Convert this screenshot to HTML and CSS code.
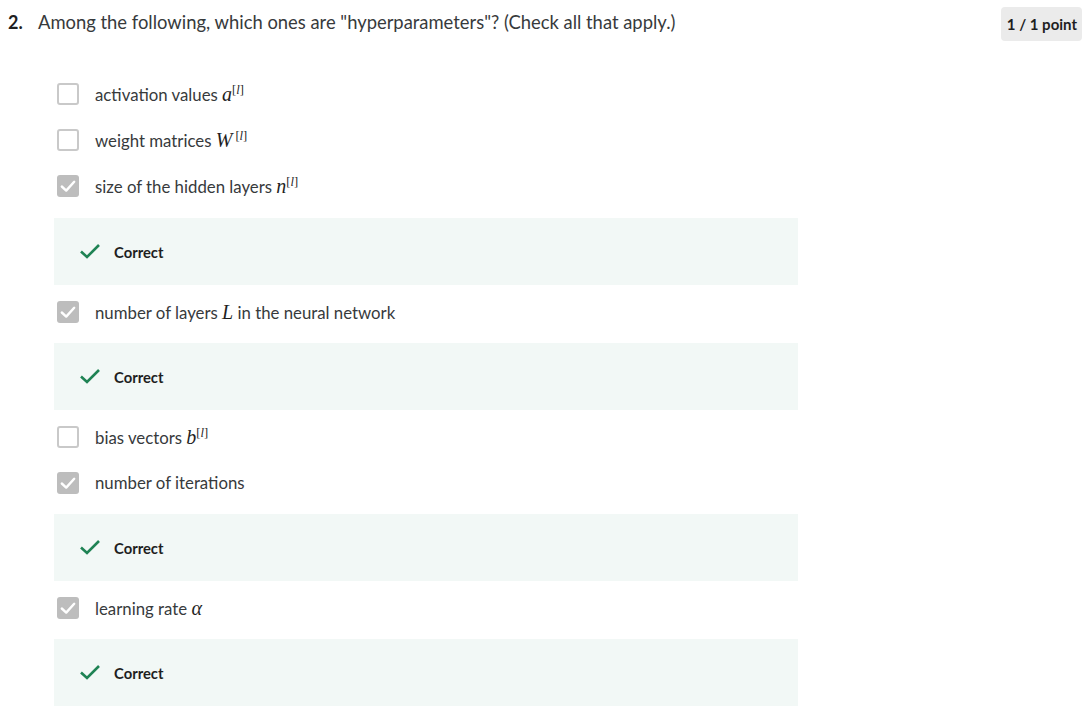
FILE: index.html
```html
<!DOCTYPE html>
<html lang="en">
<head>
<meta charset="utf-8">
<title>Quiz question</title>
<link rel="stylesheet" href="styles.css">
</head>
<body>
<div class="question">
  <div class="q-head">
    <span class="q-num">2.</span>
    <span class="q-text">Among the following, which ones are "hyperparameters"? (Check all that apply.)</span>
    <span class="badge">1 / 1 point</span>
  </div>
  <div class="options">
    <div class="opt"><span class="box"></span><span class="label">activation values <span class="m">a</span><sup class="sup">[<i>l</i>]</sup></span></div>
    <div class="opt"><span class="box"></span><span class="label">weight matrices <span class="m">W</span><sup class="sup sup-w">[<i>l</i>]</sup></span></div>
    <div class="opt"><span class="box checked"><svg viewBox="0 0 22 22" width="22" height="22"><path d="M4.8 11.5 L9.2 15.6 L17.2 6.8" fill="none" stroke="#fff" stroke-width="2.4" stroke-linecap="round" stroke-linejoin="round"/></svg></span><span class="label">size of the hidden layers <span class="m">n</span><sup class="sup">[<i>l</i>]</sup></span></div>
    <div class="fb fb-first"><svg class="ok" viewBox="0 0 20 15" width="20" height="15"><path d="M1 7.5 L7 13 L19 1" fill="none" stroke="#1f8354" stroke-width="2.6"/></svg><span class="fb-text">Correct</span></div>
    <div class="opt"><span class="box checked"><svg viewBox="0 0 22 22" width="22" height="22"><path d="M4.8 11.5 L9.2 15.6 L17.2 6.8" fill="none" stroke="#fff" stroke-width="2.4" stroke-linecap="round" stroke-linejoin="round"/></svg></span><span class="label">number of layers <span class="m">L</span> in the neural network</span></div>
    <div class="fb"><svg class="ok" viewBox="0 0 20 15" width="20" height="15"><path d="M1 7.5 L7 13 L19 1" fill="none" stroke="#1f8354" stroke-width="2.6"/></svg><span class="fb-text">Correct</span></div>
    <div class="opt"><span class="box"></span><span class="label">bias vectors <span class="m">b</span><sup class="sup">[<i>l</i>]</sup></span></div>
    <div class="opt"><span class="box checked"><svg viewBox="0 0 22 22" width="22" height="22"><path d="M4.8 11.5 L9.2 15.6 L17.2 6.8" fill="none" stroke="#fff" stroke-width="2.4" stroke-linecap="round" stroke-linejoin="round"/></svg></span><span class="label">number of iterations</span></div>
    <div class="fb"><svg class="ok" viewBox="0 0 20 15" width="20" height="15"><path d="M1 7.5 L7 13 L19 1" fill="none" stroke="#1f8354" stroke-width="2.6"/></svg><span class="fb-text">Correct</span></div>
    <div class="opt"><span class="box checked"><svg viewBox="0 0 22 22" width="22" height="22"><path d="M4.8 11.5 L9.2 15.6 L17.2 6.8" fill="none" stroke="#fff" stroke-width="2.4" stroke-linecap="round" stroke-linejoin="round"/></svg></span><span class="label">learning rate <span class="m">α</span></span></div>
    <div class="fb"><svg class="ok" viewBox="0 0 20 15" width="20" height="15"><path d="M1 7.5 L7 13 L19 1" fill="none" stroke="#1f8354" stroke-width="2.6"/></svg><span class="fb-text">Correct</span></div>
  </div>
</div>
</body>
</html>
```
FILE: styles.css
```css
html, body {
  margin: 0;
  padding: 0;
  background: #ffffff;
}
body {
  font-family: Lato, "Liberation Sans", sans-serif;
  color: #1f1f1f;
}
.question {
  padding: 0 10px 0 8px;
}
.q-head {
  display: flex;
  align-items: flex-start;
  height: 71px;
}
.q-num {
  font-weight: 700;
  font-size: 18px;
  line-height: 22px;
  padding-top: 11px;
  width: 30px;
  color: #1f1f1f;
}
.q-text {
  flex: 1;
  font-size: 18.4px;
  line-height: 22px;
  padding-top: 11px;
  color: #373a3c;
}
.badge {
  margin-top: 7px;
  background: #ebebeb;
  border-radius: 4px;
  padding: 0 5px 0 6px;
  height: 34px;
  line-height: 34px;
  font-size: 15px;
  font-weight: 700;
  color: #1f1f1f;
}
.options {
  padding-left: 46px;
  width: 744px;
}
.opt {
  display: flex;
  align-items: center;
  height: 46px;
  padding-left: 3px;
}
.box {
  box-sizing: border-box;
  width: 22px;
  height: 22px;
  border: 2px solid #c9c9c9;
  border-radius: 3px;
  background: #fff;
  margin-right: 16px;
  flex: none;
}
.box.checked {
  border: none;
  background: #bdbdbd;
}
.box svg {
  display: block;
}
.label {
  font-size: 16.8px;
  color: #373a3c;
  line-height: 22px;
}
.m {
  font-family: "Liberation Serif", "DejaVu Serif", serif;
  font-style: italic;
  font-size: 20px;
  color: #1f1f1f;
}
.sup {
  font-family: "Liberation Serif", "DejaVu Serif", serif;
  font-size: 12.5px;
  color: #1f1f1f;
  vertical-align: 7px;
  line-height: 0;
}
.sup-w {
  margin-left: 3px;
}
.fb {
  display: flex;
  align-items: center;
  height: 67px;
  background: #f2f8f6;
  margin-top: 8px;
  margin-bottom: 4px;
}
.fb-first {
  margin-top: 9px;
}
.ok {
  margin-left: 26px;
  margin-right: 14px;
  flex: none;
}
.fb-text {
  font-size: 14.8px;
  font-weight: 700;
  color: #1f1f1f;
}
```
